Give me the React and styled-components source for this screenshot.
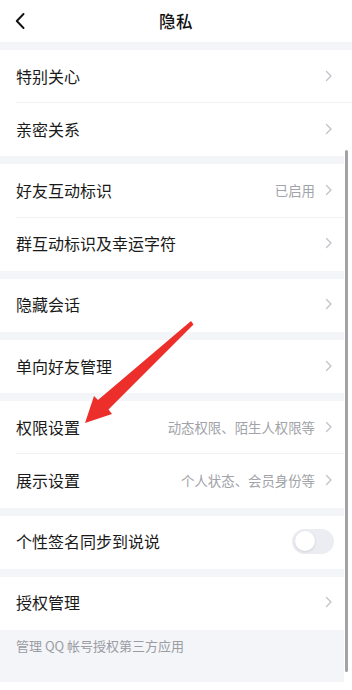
import React, { useState } from 'react';
import styled, { createGlobalStyle } from 'styled-components';

const GlobalStyle = createGlobalStyle`
  * { box-sizing: border-box; }
  html, body { margin: 0; padding: 0; background: #f4f5f9; }
  body {
    font-family: "Noto Sans CJK SC", "Noto Sans", "Liberation Sans", sans-serif;
    color: #1a1a1a;
    -webkit-font-smoothing: antialiased;
  }
`;

const groups = [
  [{ label: '特别关心' }, { label: '亲密关系' }],
  [{ label: '好友互动标识', value: '已启用' }, { label: '群互动标识及幸运字符' }],
  [{ label: '隐藏会话' }],
  [{ label: '单向好友管理' }],
  [
    { label: '权限设置', value: '动态权限、陌生人权限等' },
    { label: '展示设置', value: '个人状态、会员身份等' },
  ],
  [{ label: '个性签名同步到说说', toggle: true }],
  [{ label: '授权管理' }],
];

const Chevron = () => (
  <svg width="8" height="12" viewBox="0 0 8 12" fill="none">
    <path d="M1.5 1.5L6 6l-4.5 4.5" stroke="#c0c2c8" strokeWidth="1.3" strokeLinecap="round" strokeLinejoin="round" />
  </svg>
);

const BackIcon = () => (
  <svg width="10" height="16" viewBox="0 0 10 16" fill="none">
    <path d="M8.5 1L1.8 8l6.7 7" stroke="#111" strokeWidth="1.9" strokeLinecap="round" strokeLinejoin="round" />
  </svg>
);

const Row = ({ item, last }) => {
  const [on, setOn] = useState(false);
  return (
    <RowWrap $last={last}>
      <Label>{item.label}</Label>
      <Right>
        {item.value && <Value>{item.value}</Value>}
        {item.toggle ? (
          <Toggle $on={on} onClick={() => setOn(!on)}>
            <Knob $on={on} />
          </Toggle>
        ) : (
          <Chevron />
        )}
      </Right>
    </RowWrap>
  );
};

export default function App() {
  return (
    <Page>
      <GlobalStyle />
      <Header>
        <BackButton><BackIcon /></BackButton>
        <Title>隐私</Title>
      </Header>
      <List>
        {groups.map((g, i) => (
          <Group key={i}>
            {g.map((item, j) => (
              <Row key={item.label} item={item} last={j === g.length - 1} />
            ))}
          </Group>
        ))}
        <Caption>管理 QQ 帐号授权第三方应用</Caption>
      </List>
      <BottomBar />

      <ScrollTrack>
        <ScrollThumb />
      </ScrollTrack>

      <Arrow viewBox="0 0 352 690">
        <polygon
          points="191,321 193.5,324.5 108.5,409.5 112,414 85,423 94,396 98,400"
          fill="#ec2f2b"
        />
      </Arrow>
    </Page>
  );
}

const Page = styled.div`
  position: relative;
  width: 352px;
  height: 690px;
  overflow: hidden;
  background: #f4f5f9;
  display: flex;
  flex-direction: column;
`;

const Header = styled.header`
  position: relative;
  height: 42px;
  padding-bottom: 1px;
  background: #fff;
  display: flex;
  align-items: center;
  justify-content: center;
  flex-shrink: 0;
`;

const BackButton = styled.div`
  position: absolute;
  left: 15px;
  top: 13px;
  display: flex;
`;

const Title = styled.h1`
  margin: 0;
  font-size: 16.5px;
  font-weight: 500;
  letter-spacing: 0.5px;
  color: #111;
`;

const List = styled.div`
  flex: 1;
  padding-top: 8px;
  display: flex;
  flex-direction: column;
  gap: 8px;
`;

const Group = styled.section`
  background: #fff;
  display: flex;
  flex-direction: column;
`;

const RowWrap = styled.div`
  position: relative;
  height: 53.2px;
  display: flex;
  align-items: center;
  justify-content: space-between;
  padding: 0 19px 2px 16px;

  &::after {
    content: '';
    display: ${(p) => (p.$last ? 'none' : 'block')};
    position: absolute;
    left: 16px;
    right: 0;
    bottom: 0;
    height: 1px;
    background: #f0f1f4;
  }
`;

const Label = styled.span`
  font-size: 16px;
  color: #1a1a1a;
`;

const Right = styled.div`
  display: flex;
  align-items: center;
  gap: 10px;
`;

const Value = styled.span`
  font-size: 13.4px;
  color: #a1a3a8;
`;

const Toggle = styled.div`
  position: relative;
  width: 42px;
  height: 25px;
  border-radius: 13px;
  background: ${(p) => (p.$on ? '#12b7f5' : '#ebedf3')};
  margin-right: -1px;
  cursor: pointer;
`;

const Knob = styled.div`
  position: absolute;
  top: 2.5px;
  left: ${(p) => (p.$on ? '19.5px' : '2.5px')};
  width: 20px;
  height: 20px;
  border-radius: 50%;
  background: #fff;
  box-shadow: 0 1px 3px rgba(0, 0, 0, 0.12);
`;

const Caption = styled.p`
  margin: -8px 0 0;
  padding: 6px 16px 0;
  height: 52px;
  font-size: 13px;
  color: #9a9ca2;
`;

const BottomBar = styled.div`
  height: 8px;
  background: #fff;
  flex-shrink: 0;
`;

const ScrollTrack = styled.div`
  position: absolute;
  top: 150px;
  right: 0;
  bottom: 8px;
  width: 8px;
  background: #fff;
`;

const ScrollThumb = styled.div`
  width: 3.5px;
  height: 522px;
  margin-left: 0.5px;
  border-radius: 2px;
  background: #a3a3a6;
`;

const Arrow = styled.svg`
  position: absolute;
  left: 0;
  top: 0;
  width: 352px;
  height: 690px;
  pointer-events: none;
`;
